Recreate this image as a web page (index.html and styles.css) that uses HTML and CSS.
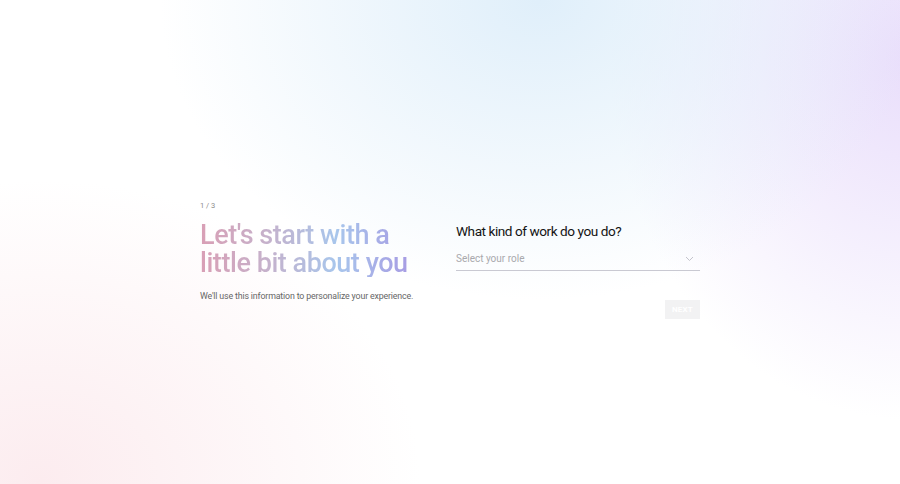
FILE: index.html
```
<!DOCTYPE html>
<html lang="en">
<head>
<meta charset="utf-8">
<title>Onboarding</title>
<link rel="stylesheet" href="styles.css">
</head>
<body>
<main class="page">
  <div class="onboard">
    <section class="intro">
      <div class="step">1 / 3</div>
      <h1 class="title">Let's start with a little bit about you</h1>
      <p class="lead">We'll use this information to personalize your experience.</p>
    </section>
    <section class="form">
      <h2 class="question">What kind of work do you do?</h2>
      <div class="select">
        <span class="placeholder">Select your role</span>
        <svg class="chev" width="9" height="6" viewBox="0 0 9 6"><path d="M1 1l3.5 3.5L8 1" fill="none" stroke="#c4c4cc" stroke-width="1"/></svg>
      </div>
      <div class="actions">
        <button class="next" type="button">NEXT</button>
      </div>
    </section>
  </div>
</main>
</body>
</html>
```
FILE: styles.css
```
* { box-sizing: border-box; }
html, body { margin: 0; padding: 0; }
body {
  width: 900px;
  height: 484px;
  overflow: hidden;
  font-family: Roboto, "Liberation Sans", sans-serif;
  background:
    radial-gradient(ellipse 380px 300px at 540px 0px, rgba(222,238,250,0.95), rgba(222,238,250,0) 100%),
    radial-gradient(ellipse 300px 360px at 910px 60px, rgba(233,222,251,1), rgba(233,222,251,0) 100%),
    radial-gradient(ellipse 380px 300px at 40px 480px, rgba(252,236,239,1), rgba(252,236,239,0) 100%),
    #ffffff;
}
.page {
  height: 484px;
  display: flex;
  justify-content: center;
  padding-top: 201px;
}
.onboard {
  width: 500px;
  display: flex;
  gap: 36px;
  align-items: flex-start;
}
.intro { width: 220px; flex: none; }
.step {
  font-size: 7.5px;
  line-height: 10px;
  color: #8a8a8a;
  margin-bottom: 10px;
}
.title {
  margin: 0;
  font-size: 27px;
  line-height: 28px;
  font-weight: 500;
  letter-spacing: -0.45px;
  background: linear-gradient(90deg, #d99fb5 0%, #c6b1cb 30%, #a8c6ec 62%, #a796e2 100%);
  -webkit-background-clip: text;
  background-clip: text;
  color: transparent;
}
.lead {
  margin: 13px 0 0;
  font-size: 8.8px;
  line-height: 12px;
  color: #666666;
  white-space: nowrap;
  letter-spacing: -0.15px;
}
.form { flex: 1; padding-top: 21px; }
.question {
  margin: 0;
  font-size: 13.6px;
  line-height: 18px;
  font-weight: 400;
  letter-spacing: -0.45px;
  color: #141414;
}
.select {
  margin-top: 11px;
  height: 20px;
  display: flex;
  align-items: center;
  justify-content: space-between;
  border-bottom: 1.5px solid #c9c9d2;
  padding: 0 6px 4px 0;
}
.placeholder {
  font-size: 10px;
  color: #a9a9ad;
}
.chev { display: block; }
.actions {
  margin-top: 29px;
  display: flex;
  justify-content: flex-end;
}
.next {
  width: 35px;
  height: 19px;
  border: 0;
  padding: 0;
  background: #f2f2f3;
  color: #ffffff;
  font-family: inherit;
  font-size: 8px;
  font-weight: 700;
  letter-spacing: 0.2px;
}
```
